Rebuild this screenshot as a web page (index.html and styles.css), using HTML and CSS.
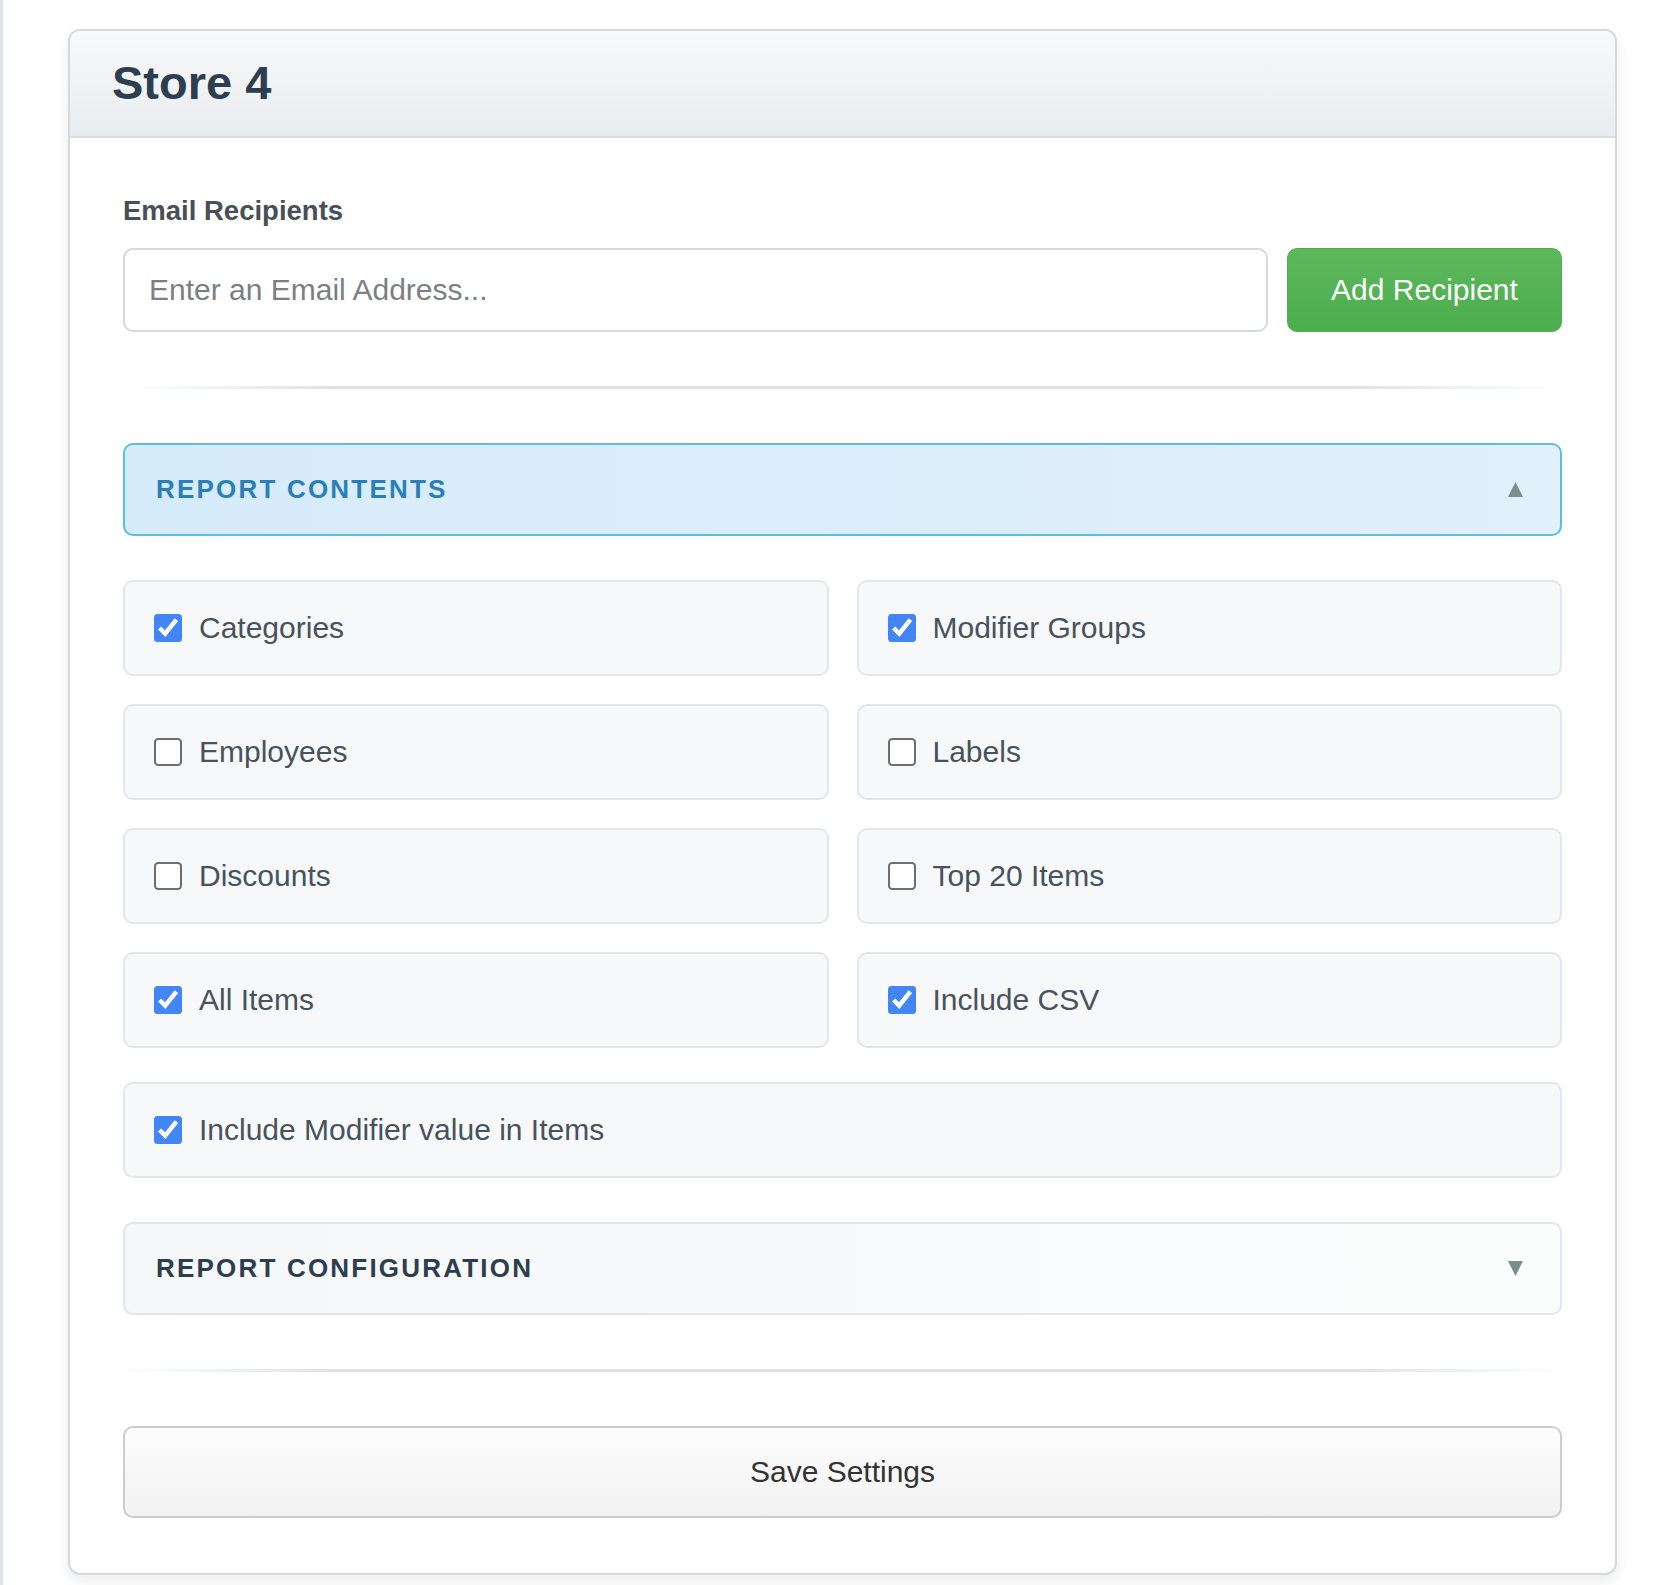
FILE: index.html
```html
<!DOCTYPE html>
<html lang="en">
<head>
    <meta charset="utf-8"/>
    <meta content="width=device-width, initial-scale=1.0" name="viewport"/>
    <title>Store 4 - Report Settings</title>
    <link rel="stylesheet" href="styles.css">
</head>
<body>
    <div class="page">
        <div class="store-card">
            <div class="store-header">
                <h1>Store 4</h1>
            </div>
            <div class="store-body">
                <label class="field-label" for="email">Email Recipients</label>
                <div class="recipient-row">
                    <input type="email" id="email" name="email" placeholder="Enter an Email Address..."/>
                    <button type="button" class="btn-add">Add Recipient</button>
                </div>

                <hr class="divider"/>

                <div class="section-toggle open">
                    <span>REPORT CONTENTS</span>
                    <svg class="caret" width="15" height="15" viewBox="0 0 15 15"><polygon points="7.5,0 15,15 0,15"/></svg>
                </div>

                <div class="options">
                    <label class="option"><input type="checkbox" checked/> Categories</label>
                    <label class="option"><input type="checkbox" checked/> Modifier Groups</label>
                    <label class="option"><input type="checkbox"/> Employees</label>
                    <label class="option"><input type="checkbox"/> Labels</label>
                    <label class="option"><input type="checkbox"/> Discounts</label>
                    <label class="option"><input type="checkbox"/> Top 20 Items</label>
                    <label class="option"><input type="checkbox" checked/> All Items</label>
                    <label class="option"><input type="checkbox" checked/> Include CSV</label>
                </div>
                <label class="option wide"><input type="checkbox" checked/> Include Modifier value in Items</label>

                <div class="section-toggle">
                    <span>REPORT CONFIGURATION</span>
                    <svg class="caret" width="15" height="15" viewBox="0 0 15 15"><polygon points="0,0 15,0 7.5,15"/></svg>
                </div>

                <hr class="divider"/>

                <button type="button" class="btn-save">Save Settings</button>
            </div>
        </div>
    </div>
</body>
</html>
```
FILE: styles.css
```css
body {
    margin: 0;
    background-color: #ffffff;
    font-family: "Liberation Sans", Arial, sans-serif;
}

.page {
    border-left: 3px solid #e2e5e8;
    padding: 29px 39px 11px 65px;
    min-height: 100vh;
    box-sizing: border-box;
}

.store-card {
    background-color: #ffffff;
    border: 2px solid #d5d9de;
    border-radius: 12px;
    box-shadow: 0 6px 14px rgba(0, 0, 0, 0.08);
    overflow: hidden;
}

.store-header {
    background: linear-gradient(#f8f9fa, #e9ecef);
    border-bottom: 2px solid #dadee3;
    padding: 25px 42px 27px 42px;
}

.store-header h1 {
    margin: 0;
    font-size: 47px;
    line-height: 53px;
    font-weight: 700;
    color: #2c3e50;
}

.store-body {
    padding: 57px 53px 55px 53px;
}

.field-label {
    display: block;
    font-size: 27.5px;
    font-weight: 700;
    color: #474f57;
    margin-bottom: 21px;
}

.recipient-row {
    display: flex;
    gap: 19px;
}

.recipient-row input {
    flex: 1;
    height: 84px;
    box-sizing: border-box;
    padding: 0 24px;
    border: 2px solid #d5d9de;
    border-radius: 10px;
    font-family: inherit;
    font-size: 30px;
    color: #333;
    background-color: #fff;
}

.recipient-row input::placeholder {
    color: #7b7f83;
}

.btn-add {
    width: 275px;
    height: 84px;
    border: 1px solid #4cae4c;
    border-radius: 10px;
    background: linear-gradient(#5cb85c, #4cae4c);
    color: #ffffff;
    font-family: inherit;
    font-size: 30px;
    cursor: pointer;
}

.divider {
    border: none;
    height: 3px;
    margin: 54px 0;
    background: linear-gradient(to right, rgba(221, 225, 230, 0), #dde1e6 15%, #dde1e6 85%, rgba(221, 225, 230, 0));
}

.section-toggle {
    display: flex;
    align-items: center;
    justify-content: space-between;
    height: 93px;
    box-sizing: border-box;
    padding: 0 37px 0 31px;
    border: 2px solid #e2e6ea;
    border-radius: 10px;
    background: linear-gradient(to right, #f6f7f9, #fbfcfc);
    font-size: 26px;
    font-weight: 700;
    letter-spacing: 2.2px;
    color: #2c3e50;
    margin-top: 44px;
    cursor: pointer;
}

.section-toggle.open {
    margin-top: 0;
    border-color: #5bc0de;
    background: linear-gradient(to right, #d6ebfa, #e1f0fb);
    color: #2980b9;
}

.caret {
    fill: #7f8c8d;
}

.options {
    display: grid;
    grid-template-columns: 1fr 1fr;
    gap: 28px;
    margin-top: 44px;
}

.option {
    display: flex;
    align-items: center;
    gap: 17px;
    height: 96px;
    box-sizing: border-box;
    padding: 0 29px;
    border: 2px solid #e3e6ea;
    border-radius: 10px;
    background-color: #f7f8fa;
    font-size: 30px;
    color: #48525c;
    cursor: pointer;
}

.option.wide {
    margin-top: 34px;
}

.option input {
    width: 16px;
    height: 16px;
    margin: 0;
    zoom: 1.75;
    accent-color: #4285f4;
}

.option input:not(:checked) {
    appearance: none;
    box-sizing: border-box;
    border: 1.15px solid #6e6e6e;
    border-radius: 2.4px;
    background-color: #ffffff;
}

.btn-save {
    display: block;
    width: 100%;
    height: 92px;
    border: 2px solid #cccccc;
    border-radius: 10px;
    background: linear-gradient(#fdfdfd, #f2f2f2);
    color: #333333;
    font-family: inherit;
    font-size: 30px;
    cursor: pointer;
}
```
